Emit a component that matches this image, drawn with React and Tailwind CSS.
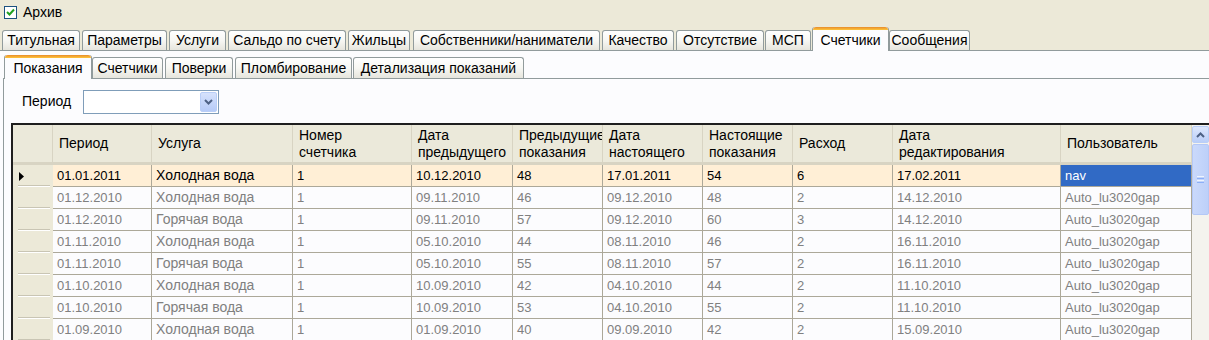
import React from 'react';

const mainTabs = [
  { label: 'Титульная', w: 78, ml: 2 },
  { label: 'Параметры', w: 85, ml: 2 },
  { label: 'Услуги', w: 57, ml: 2 },
  { label: 'Сальдо по счету', w: 118, ml: 2 },
  { label: 'Жильцы', w: 62, ml: 2 },
  { label: 'Собственники/наниматели', w: 187, ml: 3 },
  { label: 'Качество', w: 72, ml: 2 },
  { label: 'Отсутствие', w: 88, ml: 2 },
  { label: 'МСП', w: 46, ml: 1 },
  { label: 'Счетчики', w: 77, ml: 1, active: true },
  { label: 'Сообщения', w: 81, ml: 0 },
];

const subTabs = [
  { label: 'Показания', w: 88, ml: 1, active: true },
  { label: 'Счетчики', w: 71, ml: 0 },
  { label: 'Поверки', w: 68, ml: 2 },
  { label: 'Пломбирование', w: 117, ml: 2 },
  { label: 'Детализация показаний', w: 171, ml: 1 },
];

const columns = [
  ['Период'],
  ['Услуга'],
  ['Номер', 'счетчика'],
  ['Дата', 'предыдущего'],
  ['Предыдущие', 'показания'],
  ['Дата', 'настоящего'],
  ['Настоящие', 'показания'],
  ['Расход'],
  ['Дата', 'редактирования'],
  ['Пользователь'],
];

const rows = [
  ['01.01.2011', 'Холодная вода', '1', '10.12.2010', '48', '17.01.2011', '54', '6', '17.02.2011', 'nav'],
  ['01.12.2010', 'Холодная вода', '1', '09.11.2010', '46', '09.12.2010', '48', '2', '14.12.2010', 'Auto_lu3020gap'],
  ['01.12.2010', 'Горячая вода', '1', '09.11.2010', '57', '09.12.2010', '60', '3', '14.12.2010', 'Auto_lu3020gap'],
  ['01.11.2010', 'Холодная вода', '1', '05.10.2010', '44', '08.11.2010', '46', '2', '16.11.2010', 'Auto_lu3020gap'],
  ['01.11.2010', 'Горячая вода', '1', '05.10.2010', '55', '08.11.2010', '57', '2', '16.11.2010', 'Auto_lu3020gap'],
  ['01.10.2010', 'Холодная вода', '1', '10.09.2010', '42', '04.10.2010', '44', '2', '11.10.2010', 'Auto_lu3020gap'],
  ['01.10.2010', 'Горячая вода', '1', '10.09.2010', '53', '04.10.2010', '55', '2', '11.10.2010', 'Auto_lu3020gap'],
  ['01.09.2010', 'Холодная вода', '1', '01.09.2010', '40', '09.09.2010', '42', '2', '15.09.2010', 'Auto_lu3020gap'],
];

const Tab = ({ tab, h, activeH }) => {
  if (tab.active) {
    return (
      <div
        className="relative z-10 -mb-px flex flex-col rounded-t-[3px] border-x border-[#919B9C] bg-[#FCFCFE]"
        style={{ width: tab.w, height: activeH, marginLeft: tab.ml }}
      >
        <div className="h-[3px] rounded-t-[3px] bg-gradient-to-b from-[#E68B2C] to-[#FFC73C]" />
        <div className="flex flex-1 items-start justify-center whitespace-nowrap">{tab.label}</div>
      </div>
    );
  }
  return (
    <div
      className="flex items-center justify-center whitespace-nowrap rounded-t-[3px] border border-b-0 border-[#919B9C] bg-gradient-to-b from-[#FFFFFF] via-[#F7F7F3] to-[#E6E5DD]"
      style={{ width: tab.w, height: h, marginLeft: tab.ml }}
    >
      {tab.label}
    </div>
  );
};

const Chevron = ({ up }) => (
  <svg width="9" height="6" viewBox="0 0 9 6">
    <path
      d={up ? 'M1 5 L4.5 1.5 L8 5' : 'M1 1 L4.5 4.5 L8 1'}
      fill="none"
      stroke="#4D6185"
      strokeWidth="2"
    />
  </svg>
);

// columns whose values are digits / latin
const latinCols = [0, 2, 3, 4, 5, 6, 7, 8, 9];

export default function App() {
  return (
    <div className="h-[340px] w-[1209px] overflow-hidden bg-[#ECE9D8] font-['Liberation_Sans',Arial,sans-serif] text-[14px] text-black">
      {/* Архив */}
      <div className="flex h-[27px] items-center pl-[4px] pb-[2px]">
        <div className="flex h-[13px] w-[13px] items-center justify-center border border-[#1C5180] bg-white">
          <svg width="9" height="9" viewBox="0 0 9 9">
            <path d="M1 4 L3.5 6.5 L8 1.5" fill="none" stroke="#21A121" strokeWidth="2" />
          </svg>
        </div>
        <span className="ml-[6px]">Архив</span>
      </div>

      {/* main tabs */}
      <div className="flex h-[23px] items-end">
        {mainTabs.map((t) => (
          <Tab key={t.label} tab={t} h={20} activeH={24} />
        ))}
      </div>

      {/* main panel */}
      <div className="h-[290px] border-t border-[#919B9C] bg-[#FCFCFE] pl-[3px] pt-[4px]">
        <div className="flex h-[23px] items-end">
          {subTabs.map((t) => (
            <Tab key={t.label} tab={t} h={21} activeH={24} />
          ))}
        </div>

        <div className="h-[270px] border-l border-t border-[#919B9C] pl-[7px]">
          {/* period filter */}
          <div className="flex h-[44px] items-center pl-[11px] pt-[1px]">
            <span className="w-[61px]">Период</span>
            <div className="flex h-[24px] w-[136px] items-center justify-end border border-[#7F9DB9] bg-white pr-[1px]">
              <div className="flex h-[20px] w-[17px] items-center justify-center rounded-[2px] border border-[#B9CEF7] bg-gradient-to-b from-[#D6E2FC] to-[#B6CBF8]">
                <Chevron />
              </div>
            </div>
          </div>

          {/* grid */}
          <div className="flex border-l-2 border-t-2 border-[#1E1E1E] bg-[#FCFCFE]">
            <div className="w-[1179px]">
              <div className="grid h-[40px] grid-cols-[40px_99px_141px_119px_101px_90px_100px_90px_100px_168px_131px] border-b-[3px] border-[#D8D4C3] bg-[#EBE9DA] leading-[17px]">
                <div className="border-r border-[#D8D4C3]" />
                {columns.map((c, i) => (
                  <div
                    key={i}
                    className="flex flex-col justify-center overflow-hidden whitespace-nowrap border-r border-[#D8D4C3] pl-[6px]"
                  >
                    {c.map((line) => (
                      <span key={line}>{line}</span>
                    ))}
                  </div>
                ))}
              </div>
              {rows.map((r, ri) => (
                <div
                  key={ri}
                  className="grid h-[22px] grid-cols-[40px_99px_141px_119px_101px_90px_100px_90px_100px_168px_131px]"
                >
                  <div className="relative flex items-center bg-[#ECE9D8] pl-[6px]">
                    {ri === 0 && (
                      <svg width="5" height="9" viewBox="0 0 5 9">
                        <path d="M0 0 L5 4.5 L0 9 Z" fill="#000" />
                      </svg>
                    )}
                    <div className="absolute bottom-0 left-[5px] right-[3px] h-px bg-[#FFFFFF]" />
                    <div className="absolute bottom-px left-[5px] right-[3px] h-px bg-[#C9C5B4]" />
                  </div>
                  {r.map((v, ci) => {
                    const selected = ri === 0 && ci === 9;
                    return (
                      <div
                        key={ci}
                        className={
                          'flex items-center overflow-hidden whitespace-nowrap border-b border-r border-[#ACA899] pl-[4px] ' +
                          (latinCols.includes(ci) ? 'text-[13px] ' : 'text-[14px] ') +
                          (selected
                            ? 'bg-[#316AC5] text-white'
                            : ri === 0
                            ? 'bg-[#FFEFD6] text-black'
                            : 'text-[#808080]')
                        }
                      >
                        {v}
                      </div>
                    );
                  })}
                </div>
              ))}
            </div>

            {/* scrollbar */}
            <div className="flex w-[17px] flex-col bg-[#F4F3EE] pt-px">
              <div className="flex h-[17px] items-center justify-center rounded-[2px] border border-[#B9CEF7] bg-gradient-to-b from-[#DDE7FD] to-[#BACEF8]">
                <Chevron up />
              </div>
              <div className="mt-px flex h-[71px] flex-col items-center justify-center gap-[1px] rounded-[2px] border border-[#B4C8F6] bg-gradient-to-r from-[#CAD9FB] to-[#BDD0F9]">
                <div className="h-px w-[7px] bg-[#EEF4FE]" />
                <div className="h-px w-[7px] bg-[#8CB0F8]" />
                <div className="h-px w-[7px] bg-[#EEF4FE]" />
                <div className="h-px w-[7px] bg-[#8CB0F8]" />
              </div>
            </div>
          </div>
        </div>
      </div>
    </div>
  );
}
